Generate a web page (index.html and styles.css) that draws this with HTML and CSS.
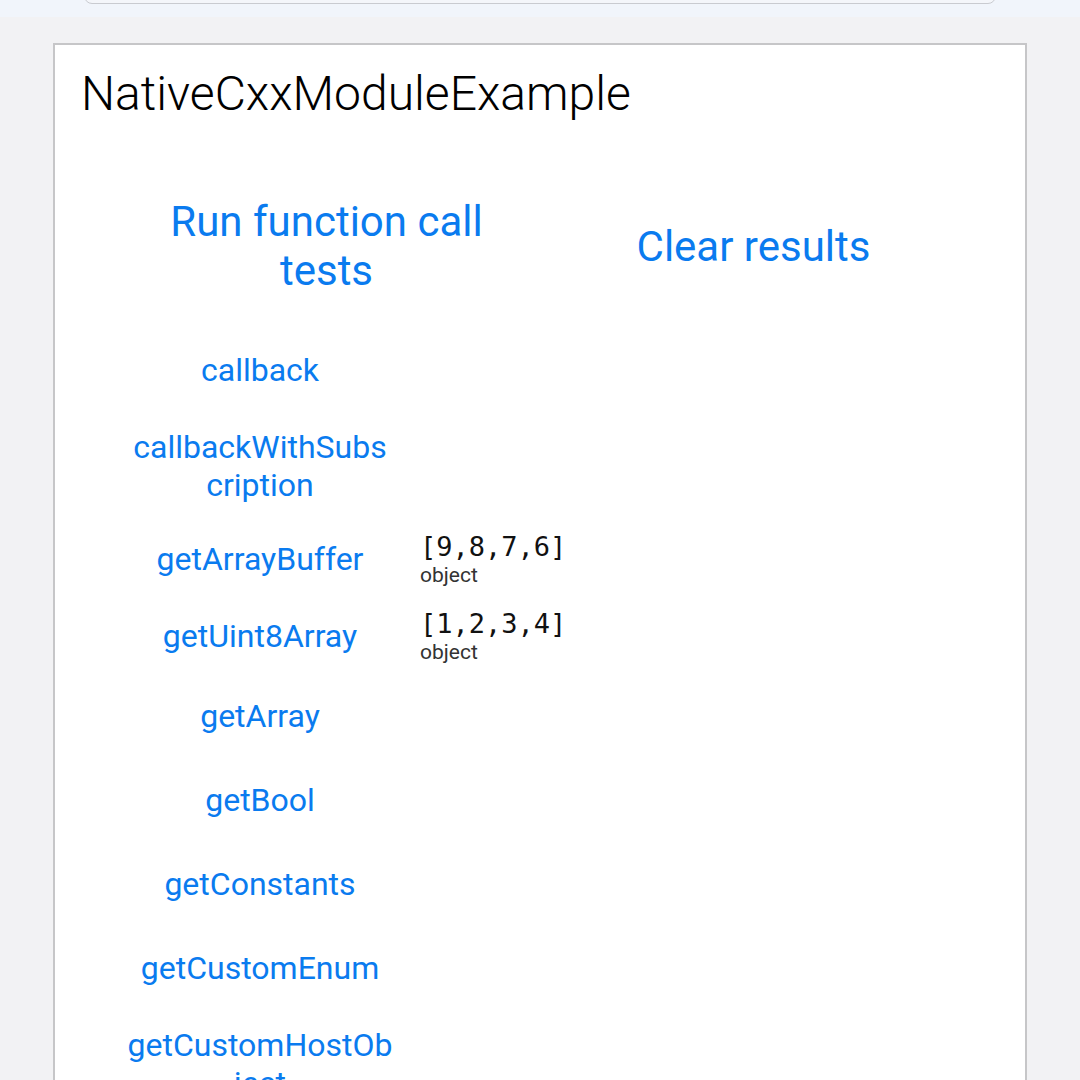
FILE: index.html
```html
<!DOCTYPE html>
<html lang="en">
<head>
    <meta charset="UTF-8">
    <meta name="viewport" content="width=device-width, initial-scale=1.0">
    <title>NativeCxxModuleExample</title>
    <link rel="stylesheet" href="styles.css">
</head>
<body>
    <div class="top-strip">
        <div class="search-bar"></div>
    </div>

    <div class="card">
        <h1 class="title">NativeCxxModuleExample</h1>

        <div class="actions">
            <div class="action"><span class="action-label">Run function call tests</span></div>
            <div class="action"><span class="action-label">Clear results</span></div>
        </div>

        <div class="tests">
            <div class="row">
                <div class="fn">callback</div>
            </div>
            <div class="row wrap">
                <div class="fn">callbackWithSubscription</div>
            </div>
            <div class="row has-result">
                <div class="fn">getArrayBuffer</div>
                <div class="result">
                    <div class="value">[9,8,7,6]</div>
                    <div class="type">object</div>
                </div>
            </div>
            <div class="row has-result">
                <div class="fn">getUint8Array</div>
                <div class="result">
                    <div class="value">[1,2,3,4]</div>
                    <div class="type">object</div>
                </div>
            </div>
            <div class="row">
                <div class="fn">getArray</div>
            </div>
            <div class="row">
                <div class="fn">getBool</div>
            </div>
            <div class="row">
                <div class="fn">getConstants</div>
            </div>
            <div class="row">
                <div class="fn">getCustomEnum</div>
            </div>
            <div class="row wrap">
                <div class="fn">getCustomHostObject</div>
            </div>
        </div>
    </div>
</body>
</html>
```

FILE: styles.css
```css
html, body {
    height: 100%;
    overflow: hidden;
}
body {
    margin: 0;
    background: #f2f2f4;
    font-family: Roboto, "Noto Sans", sans-serif;
}
.top-strip {
    height: 17px;
    background: #f1f5fb;
    padding: 0 84px;
    overflow: hidden;
}
.search-bar {
    height: 14px;
    margin-top: -12px;
    border: 1px solid #c9cbd0;
    border-radius: 14px;
    background: #f4f6fa;
}
.card {
    margin: 26px 53px 0;
    background: #fff;
    border: 2px solid #c6c6c8;
    border-bottom: none;
    padding: 21px 0 0;
    height: 1100px;
}
.title {
    margin: 0 0 0 26px;
    font-size: 48px;
    font-weight: 300;
    line-height: 56px;
    color: #000;
}
.actions {
    display: flex;
    padding: 0 58px;
    margin-top: 75px;
}
.action {
    flex: 1;
    display: flex;
    align-items: center;
    justify-content: center;
    padding: 0 24px;
    text-align: center;
}
.action-label {
    font-size: 42px;
    line-height: 49px;
    color: #0a7bef;
}
.tests {
    margin-top: 33px;
}
.row {
    display: flex;
    align-items: center;
    height: 84px;
}
.row.wrap {
    height: 108px;
}
.row.has-result {
    height: 77px;
}
.fn {
    width: 266px;
    margin-left: 72px;
    text-align: center;
    font-size: 32px;
    line-height: 38px;
    color: #0a7bef;
    overflow-wrap: anywhere;
}
.result {
    margin-left: 27px;
}
.value {
    font-family: "DejaVu Sans Mono", monospace;
    font-size: 27px;
    line-height: 32px;
    color: #111;
}
.type {
    font-size: 21px;
    line-height: 24px;
    color: #333;
}
```
